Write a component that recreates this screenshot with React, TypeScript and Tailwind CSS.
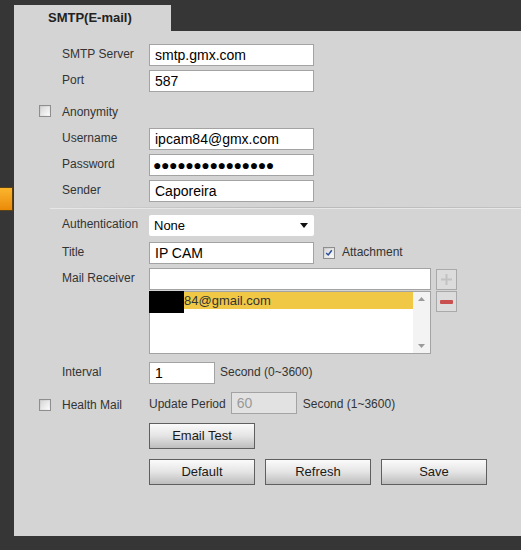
import React from 'react';

const font = { fontFamily: '"Liberation Sans", Arial, sans-serif' };

function Label({ children }: { children: React.ReactNode }) {
  return <div className="w-[87px] text-[12px] text-[#333] leading-none -mt-[3px]">{children}</div>;
}

function TextBox({ value, w = 'w-[165px]', disabled = false }: { value: string; w?: string; disabled?: boolean }) {
  return (
    <div
      className={`${w} h-[22px] border border-[#a3a3a3] flex items-center pl-[5px] text-[14px] ${
        disabled ? 'bg-[#e2e2e2] text-[#999]' : 'bg-white text-black'
      }`}
    >
      {value}
    </div>
  );
}

function CheckBox({ checked = false }: { checked?: boolean }) {
  return (
    <div className="w-[12px] h-[12px] border border-[#8e8e8e] bg-gradient-to-br from-[#c9c9c9] to-[#f7f7f7] p-[1px]">
      <div className="w-full h-full bg-gradient-to-br from-[#d8d8d8] to-[#fafafa] flex items-center justify-center">
        {checked && (
          <svg width="10" height="10" viewBox="0 0 10 10">
            <path d="M1.5 5 L4 7.5 L8.5 1.5" stroke="#2b4f9c" strokeWidth="1.8" fill="none" />
          </svg>
        )}
      </div>
    </div>
  );
}

function Btn({ children }: { children: React.ReactNode }) {
  return (
    <div className="w-[106px] h-[26px] border border-[#5f5f5f] bg-gradient-to-b from-[#fbfbfb] via-[#e4e4e4] to-[#bdbdbd] flex items-center justify-center text-[13px] text-[#1a1a1a]">
      {children}
    </div>
  );
}

export default function App() {
  return (
    <div className="w-[521px] h-[550px] bg-[#363636] flex overflow-hidden" style={font}>
      {/* left strip */}
      <div className="w-[14px] shrink-0">
        <div className="mt-[187px] w-[13px] h-[24px] bg-gradient-to-b from-[#fbb62c] to-[#ea8a05] border-y border-r border-[#5a4216]" />
      </div>

      <div className="flex-1 flex flex-col">
        {/* tab */}
        <div className="mt-[5px] w-[157px] h-[26px] bg-[#d4d4d4] flex items-center pl-[34px] text-[13px] font-bold text-[#222]">
          SMTP(E-mail)
        </div>

        {/* panel */}
        <div className="h-[505px] bg-[#d4d4d4] flex flex-col">
          <div className="flex items-center h-[22px] mt-[13px] pl-[48px]">
            <Label>SMTP Server</Label>
            <TextBox value="smtp.gmx.com" />
          </div>
          <div className="flex items-center h-[22px] mt-[4px] pl-[48px]">
            <Label>Port</Label>
            <TextBox value="587" />
          </div>
          <div className="flex items-center h-[22px] mt-[8px] pl-[25px]">
            <CheckBox />
            <div className="ml-[11px] mt-[1px] text-[12px] text-[#333]">Anonymity</div>
          </div>
          <div className="flex items-center h-[22px] mt-[6px] pl-[48px]">
            <Label>Username</Label>
            <TextBox value="ipcam84@gmx.com" />
          </div>
          <div className="flex items-center h-[22px] mt-[4px] pl-[48px]">
            <Label>Password</Label>
            <div className="w-[165px] h-[22px] border border-[#a3a3a3] bg-white flex items-center pl-[3px] text-[14px] tracking-[-0.4px] text-black">
              ●●●●●●●●●●●●●●●
            </div>
          </div>
          <div className="flex items-center h-[22px] mt-[4px] pl-[48px]">
            <Label>Sender</Label>
            <TextBox value="Caporeira" />
          </div>

          {/* separator */}
          <div className="mt-[5px] ml-[36px] h-[2px] bg-gradient-to-r from-[#d4d4d4] via-[#b9b9b9] to-[#c2c2c2] border-b border-[#e6e6e6]" />

          <div className="flex items-center h-[21px] mt-[6px] pl-[48px]">
            <Label>Authentication</Label>
            <div className="w-[165px] h-[21px] bg-white rounded-[2px] flex items-center justify-between pl-[5px] pr-[6px] text-[13px] text-black">
              <span>None</span>
              <svg width="8" height="5" viewBox="0 0 8 5">
                <path d="M0 0 H8 L4 5 Z" fill="#111" />
              </svg>
            </div>
          </div>
          <div className="flex items-center h-[22px] mt-[6px] pl-[48px]">
            <Label>Title</Label>
            <TextBox value="IP CAM" />
            <div className="ml-[9px]">
              <CheckBox checked />
            </div>
            <div className="ml-[7px] text-[12px] text-[#333] -mt-[3px]">Attachment</div>
          </div>
          <div className="flex items-center h-[22px] mt-[4px] pl-[48px]">
            <Label>Mail Receiver</Label>
            <div className="w-[282px] h-[22px] border border-[#a3a3a3] bg-white" />
            <div className="ml-[5px] w-[21px] h-[21px] border border-[#a9a9a9] bg-[#dcdcdc] flex items-center justify-center">
              <svg width="13" height="13" viewBox="0 0 13 13">
                <path d="M6.5 1 V12 M1 6.5 H12" stroke="#c2c2c2" strokeWidth="2" />
              </svg>
            </div>
          </div>
          <div className="flex mt-[1px] pl-[135px]">
            <div className="relative w-[282px] h-[63px] border border-[#a3a3a3] bg-white flex">
              <div className="flex-1">
                <div className="h-[17px] bg-[#f0c846] flex items-center pl-[34px] text-[13px] text-[#333]">
                  84@gmail.com
                </div>
              </div>
              <div className="w-[17px] bg-[#f3f3f3] flex flex-col justify-between items-center py-[5px]">
                <svg width="7" height="4" viewBox="0 0 7 4">
                  <path d="M0 4 H7 L3.5 0 Z" fill="#9a9a9a" />
                </svg>
                <svg width="7" height="4" viewBox="0 0 7 4">
                  <path d="M0 0 H7 L3.5 4 Z" fill="#9a9a9a" />
                </svg>
              </div>
              <div className="absolute left-[-1px] top-[-1px] w-[35px] h-[22px] bg-black" />
            </div>
            <div className="ml-[5px] w-[21px] h-[21px] border border-[#a9a9a9] bg-[#dcdcdc] flex items-center justify-center">
              <div className="w-[13px] h-[4px] bg-[#c9504f] rounded-[1px]" />
            </div>
          </div>

          <div className="flex items-center h-[22px] mt-[8px] pl-[48px]">
            <Label>Interval</Label>
            <TextBox value="1" w="w-[66px]" />
            <div className="ml-[5px] text-[12px] text-[#333] -mt-[3px]">Second (0~3600)</div>
          </div>
          <div className="flex items-center h-[22px] mt-[8px] pl-[25px]">
            <div className="mt-[4px]">
              <CheckBox />
            </div>
            <div className="ml-[11px] mt-[3px] w-[87px] text-[12px] text-[#333]">Health Mail</div>
            <div className="mt-[2px] text-[12px] text-[#333]">Update Period</div>
            <div className="ml-[5px]">
              <TextBox value="60" w="w-[66px]" disabled />
            </div>
            <div className="ml-[6px] mt-[2px] text-[12px] text-[#333]">Second (1~3600)</div>
          </div>
          <div className="flex mt-[9px] pl-[135px]">
            <Btn>Email Test</Btn>
          </div>
          <div className="flex gap-[10px] mt-[10px] pl-[135px]">
            <Btn>Default</Btn>
            <Btn>Refresh</Btn>
            <Btn>Save</Btn>
          </div>
        </div>
      </div>
    </div>
  );
}
